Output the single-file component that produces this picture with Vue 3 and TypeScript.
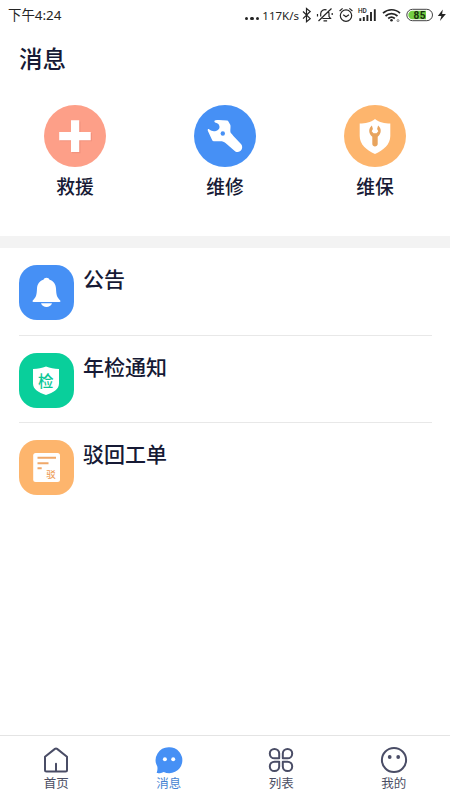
<script setup lang="ts">
import { ref } from 'vue'

type Icon = 'rescue' | 'repair' | 'care' | 'bell' | 'check' | 'reject' | 'home' | 'chat' | 'grid' | 'me'
interface Entry {
  icon: Icon
  label: string
}

const services: Entry[] = [
  { icon: 'rescue', label: '救援' },
  { icon: 'repair', label: '维修' },
  { icon: 'care', label: '维保' },
]
const notices: Entry[] = [
  { icon: 'bell', label: '公告' },
  { icon: 'check', label: '年检通知' },
  { icon: 'reject', label: '驳回工单' },
]
const tabs: Entry[] = [
  { icon: 'home', label: '首页' },
  { icon: 'chat', label: '消息' },
  { icon: 'grid', label: '列表' },
  { icon: 'me', label: '我的' },
]
const active = ref<Icon>('chat')
</script>

<template>
  <div class="screen">
    <header class="status">
      <span class="time">下午4:24</span>
      <span class="net"><span class="dots"><i /><i /><i /></span><span class="speed">117K/s</span></span>
      <svg class="status-icons" viewBox="300 0 150 32" width="150" height="32" fill="none" stroke="#242424" stroke-width="1.2">
        <path d="M303 11.500l7.200 7.200-3.700 3V8.500l3.700 3-7.200 7.200" />
        <path d="M322.500 18.500h8l-1.500-2v-3a4.200 4.200 0 0 0-1-2.700M326.500 9.900a4.200 4.200 0 0 0-5.800 3.600v3M323.500 20.800h3.600M331.500 8.500l-13 12.500M317.500 14v2.500M332.200 13v2" />
        <circle cx="346" cy="15.600" r="5.700" />
        <path d="M343.200 14.700l2.800 2 3-2M339.600 11l3-2.600M352.400 11l-3-2.600" />
        <text x="358" y="12.700" class="hd">HD</text>
        <path stroke-width="1.900" d="M360.300 21v-2.800M363.800 21v-4M367.400 21v-6M371 21v-9M374.800 21V9.300" />
        <path stroke-width="1.700" d="M383 13.200c5-4.600 12.200-4.600 17 0M385.500 16c3.500-3.200 8.500-3.200 12 0M388.200 18.500c2-1.800 4.600-1.800 6.600 0" />
        <circle cx="391.500" cy="20.300" r="1.300" fill="#242424" stroke="none" />
        <circle cx="398" cy="20.600" r="1" stroke="#777" stroke-width=".9" />
        <rect x="406.800" y="9.300" width="25.700" height="11.400" rx="5.700" stroke="#444" stroke-width="1" />
        <path d="M412.500 10.800h13.500v8.400h-13.500a4.200 4.200 0 0 1 0-8.400z" fill="#74cf45" stroke="none" />
        <text x="413.500" y="18.700" class="battery">85</text>
        <path d="M442.800 9.500l-5 6.500h3.600l-1.500 5 6-7h-3.800z" fill="#242424" stroke="none" />
      </svg>
    </header>

    <h1 class="title">消息</h1>

    <section class="services">
      <div v-for="s in services" :key="s.icon" class="service">
        <div class="disc" :class="s.icon">
          <svg viewBox="0 0 62 62" width="62" height="62">
            <g v-if="s.icon === 'rescue'">
              <path d="M28 16.500h8.500v11.500h11.500v8.200h-11.500v12h-8.500v-12h-12V28h12z" fill="#e98671" opacity=".5" />
              <path d="M27 15.200h8.200v11.800h11.500v8.200H35.200V47H27V35.200H15.200V27H27z" fill="#fff" />
            </g>
            <g v-else-if="s.icon === 'repair'">
              <path d="M21.500 15.200c4-.8 7.500.2 11.500.2q1 0 1.400 1l2 3.700c.4 2.600-.3 4.700 0 7 .3 1.400 1.800 2.200 3 3.800l7.800 8.400c3 4.300-1.400 9.500-5.900 7.200L31.500 38c-1.400-1.100-3-1.700-5-1.700h-6.600q-1.300 0-1.800-1.200l-4.300-9.300c-.4-1.700.5-2.100 1.600-1.300 2 1.700 4.300 2 6.600 1.400 1.500-.4 2.500-1.200 3.200-2.300.6-1.700.3-3-.8-4.700-1.100-.9-2.500-.9-3.600-1.700-.7-.7-.5-1.700.7-2z" fill="#fff" />
              <circle cx="28.800" cy="28.500" r="2.200" fill="#4690f5" />
            </g>
            <g v-else>
              <path d="M31 14c4.500 3.600 9.500 4.400 15.300 4.600V31c0 8.500-6.800 14-15.300 18-8.500-4-15.300-9.500-15.300-18V18.600c5.800-.2 10.800-1 15.300-4.600z" fill="#fff" />
              <path d="M27.900 20.500c-3.600 2.800-3.600 8.200.4 11.200V39c0 3.200 5.400 3.200 5.400 0v-7.300c4-3 4-8.400.4-11.200l-1 3.500 1.200 2.200-1.800 2h-3l-1.800-2 1.200-2.200z" fill="#e8a45e" />
            </g>
          </svg>
        </div>
        <span class="service-label">{{ s.label }}</span>
      </div>
    </section>

    <main class="notices">
      <div v-for="n in notices" :key="n.icon" class="notice">
        <div class="tile" :class="n.icon">
          <svg viewBox="0 0 55 55" width="55" height="55">
            <g v-if="n.icon === 'bell'" fill="#fff">
              <path d="M27.500 12.700c1.600 0 2.600.8 3.100 2 4 1.400 6.200 4.600 6.400 8.800.3 6.600.8 8.500 4.200 12 .6.700.2 1.500-.7 1.500h-26c-.9 0-1.300-.8-.7-1.500 3.400-3.500 3.900-5.400 4.200-12 .2-4.200 2.400-7.400 6.400-8.800.5-1.200 1.500-2 3.100-2z" />
              <path d="M22 38.200h11c-1.600 5-9.400 5-11 0z" />
            </g>
            <g v-else-if="n.icon === 'check'">
              <path d="M27 13.500c4 1.700 8 2.300 13 2.500v14.500c0 6-5.500 8.800-13 11.500-7.500-2.700-13-5.500-13-11.500V16c5-.2 9-.8 13-2.500z" fill="#fff" />
              <text x="19" y="33.800" class="check-text">检</text>
            </g>
            <g v-else>
              <rect x="14.200" y="13" width="26.800" height="29" rx="2.500" fill="#fff" />
              <path d="M18.500 17.800H37M18.500 23.200h11M18.500 28.300h4.200" stroke="#f0a869" stroke-width="2" />
              <text x="27.300" y="37.500" class="reject-text">驳</text>
            </g>
          </svg>
        </div>
        <span class="notice-label">{{ n.label }}</span>
      </div>
    </main>

    <nav class="tabs">
      <button v-for="t in tabs" :key="t.icon" class="tab" :class="{ active: active === t.icon }" @click="active = t.icon">
        <svg viewBox="0 0 28 28" width="28" height="28" fill="none" stroke="#4a4d66" stroke-width="2" stroke-linejoin="round" stroke-linecap="round">
          <path v-if="t.icon === 'home'" d="M3 10.800L12.900 2.900q1.100-.8 2.200 0L25 10.800V24q0 1.500-1.500 1.500h-19Q3 25.500 3 24zM14 17.800v7" />
          <g v-else-if="t.icon === 'chat'" stroke="none">
            <path d="M14 1.200a13 13 0 1 1-5.300 24.700c-1.800.8-4.200 1.400-6.300 1.200-.7-.1-.8-.7-.5-1.200.7-1.800.7-3.700.4-5.400A13 13 0 0 1 14 1.200z" fill="#4690f5" />
            <circle cx="9.900" cy="13.300" r="2" fill="#fff" /><circle cx="18.200" cy="13.300" r="2" fill="#fff" />
          </g>
          <g v-else-if="t.icon === 'grid'">
            <path d="M12.200 12.300V7.500a4.700 4.700 0 1 0-4.700 4.800zM15.800 12.300V7.500a4.700 4.700 0 1 1 4.700 4.800zM12.200 15.700v4.800a4.700 4.700 0 1 1-4.700-4.800zM15.800 15.700v4.800a4.700 4.700 0 1 0 4.700-4.800z" />
          </g>
          <g v-else>
            <circle cx="14" cy="14" r="12.100" />
            <circle cx="9.700" cy="11" r="1.900" fill="#4a4d66" stroke="none" /><circle cx="18.200" cy="11" r="1.900" fill="#4a4d66" stroke="none" />
          </g>
        </svg>
        <span class="tab-label">{{ t.label }}</span>
      </button>
    </nav>
  </div>
</template>

<style>
body {
  background: #fff;
}
</style>

<style scoped>
.screen {
  display: flex;
  flex-direction: column;
  width: 450px;
  height: 800px;
  overflow: hidden;
  background: #fff;
  color: #161a35;
  font-family: Roboto, "Noto Sans CJK SC", sans-serif;
}
.status {
  display: flex;
  align-items: center;
  height: 32px;
  color: #242424;
}
.time {
  padding-left: 8px;
  font: 13.400px/28px "Noto Sans", "Noto Sans CJK SC", sans-serif;
  margin-bottom: 2px;
}
.net {
  display: flex;
  align-items: center;
  margin-left: auto;
}
.dots {
  display: flex;
  gap: 2px;
  padding: 5px 3px 0 0;
}
.dots i {
  width: 3.500px;
  height: 3.500px;
  border-radius: 50%;
  background: #242424;
}
.speed {
  padding-right: 1px;
  font: 11.500px/30px "Noto Sans", sans-serif;
}
.status-icons {
  flex: none;
}
.hd {
  font: 500 6.500px Roboto, sans-serif;
  fill: #242424;
  stroke: none;
}
.battery {
  font: 700 10px Roboto, sans-serif;
  letter-spacing: 0.4px;
  fill: #17320f;
  stroke: none;
}
.title {
  margin: 0;
  padding: 9px 19px 0;
  font-size: 23.500px;
  font-weight: 500;
  line-height: 38px;
}
.services {
  display: grid;
  grid-template-columns: repeat(3, 1fr);
  height: 157px;
  padding-top: 26px;
  box-sizing: border-box;
}
.service {
  display: flex;
  flex-direction: column;
  align-items: center;
}
.disc {
  width: 62px;
  height: 62px;
  border-radius: 50%;
}
.rescue {
  background: #fd9f88;
}
.repair,
.bell {
  background: #4690f5;
}
.care,
.reject {
  background: #fdb56d;
}
.check {
  background: #09cf9b;
}
.service-label {
  margin-top: 7px;
  font-size: 18.800px;
  font-weight: 500;
  line-height: 28px;
}
.notices {
  flex: 1;
  border-top: 12px solid #f3f3f3;
}
.notice {
  display: flex;
  gap: 9px;
  box-sizing: border-box;
  height: 87.500px;
  margin: 0 18px 0 19px;
  padding-top: 17px;
  border-bottom: 1px solid #e8e8e8;
}
.notice:last-child {
  border-bottom: 0;
}
.tile {
  width: 55px;
  height: 55px;
  border-radius: 18px;
}
.check-text {
  font: 500 15.500px "Noto Sans CJK SC", sans-serif;
  fill: #09c795;
}
.reject-text {
  font: 500 9.500px "Noto Sans CJK SC", sans-serif;
  fill: #ed9d58;
}
.notice-label {
  font-size: 21px;
  font-weight: 500;
  line-height: 31px;
}
.tabs {
  display: grid;
  grid-template-columns: repeat(4, 1fr);
  height: 65px;
  box-sizing: border-box;
  border-top: 1px solid #e4e4e4;
}
.tab {
  display: flex;
  flex-direction: column;
  align-items: center;
  padding: 10px 0 0;
  border: 0;
  background: none;
  color: #4a4d62;
  font: 12.500px/20px Roboto, "Noto Sans CJK SC", sans-serif;
}
.tab.active {
  color: #4684d2;
}
</style>
